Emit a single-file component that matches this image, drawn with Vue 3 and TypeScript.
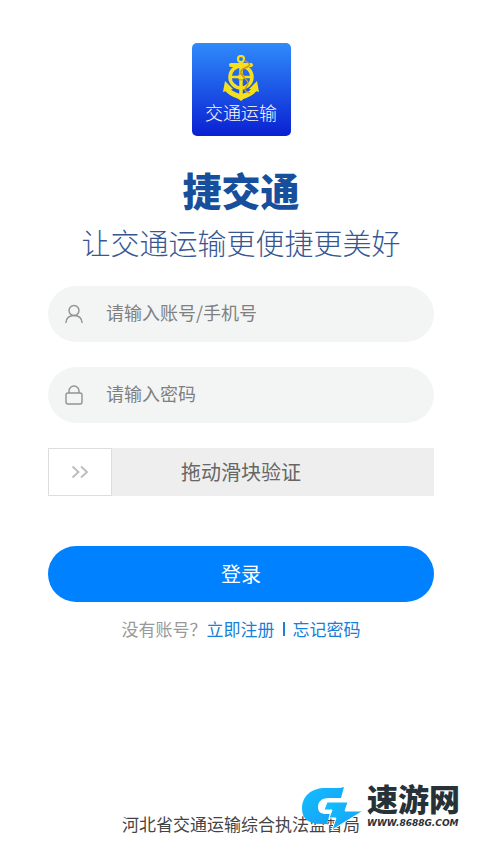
<script setup lang="ts">
import { ref } from 'vue'

const account = ref('')
const password = ref('')
const slider = ref(0)
</script>

<template>
  <main class="page">
    <header class="brand">
      <div class="logo">
        <svg class="anchor" viewBox="0 0 36 46" fill="none" stroke="#f4e01c" aria-hidden="true">
          <circle cx="18" cy="4" r="3" stroke-width="2.2" />
          <path d="M8 10h20" stroke-width="4" stroke-linecap="round" />
          <path d="M18 7v34" stroke-width="3.5" />
          <circle cx="18" cy="22" r="11" stroke-width="3.5" />
          <circle cx="18" cy="22" r="3" fill="#f4e01c" stroke="#c9a820" />
          <path d="M7 22h22" stroke-width="2.5" />
          <path d="M3 32c2 5 8 8 15 10c7-2 13-5 15-10" stroke-width="5" />
          <path d="M0 37l2-11l8 8zM36 37l-2-11l-8 8zM12 41l6 5l6-5z" fill="#f4e01c" stroke="none" />
          <path d="M21 5c5 3 8 5 3 7s-8 4-5 8s8 6 5 11s-4 4 3 7" stroke="#cf9422" stroke-width="1.4" />
        </svg>
        <span class="logo-text">交通运输</span>
      </div>
      <h1 class="title">捷交通</h1>
      <p class="tagline">让交通运输更便捷更美好</p>
    </header>

    <form class="form" @submit.prevent>
      <label class="field">
        <svg class="icon" viewBox="0 0 20 20" aria-hidden="true">
          <circle cx="10" cy="6.5" r="5" />
          <path d="M1.8 19c.4-4.500 3.500-7.500 8.200-7.500s7.800 3 8.200 7.500" />
        </svg>
        <input v-model="account" class="input" type="text" placeholder="请输入账号/手机号" aria-label="账号" />
      </label>
      <label class="field">
        <svg class="icon" viewBox="0 0 20 20" aria-hidden="true">
          <rect x="2" y="8" width="16" height="11" rx="2" />
          <path d="M5 8V6a5 5 0 0 1 10 0v2" />
        </svg>
        <input v-model="password" class="input" type="password" placeholder="请输入密码" aria-label="密码" />
      </label>
      <label class="verify">
        <input v-model="slider" class="range" type="range" min="0" max="100" aria-label="拖动滑块验证" />
        <svg class="chevrons" viewBox="0 0 18 14" aria-hidden="true">
          <path d="M1.500 1.500l6 5.500l-6 5.500M10 1.500l6 5.500l-6 5.500" />
        </svg>
        <span class="verify-text">拖动滑块验证</span>
      </label>
      <button class="submit" type="submit">登录</button>
    </form>

    <nav class="links">
      <span class="hint">没有账号？</span>
      <a href="#register">立即注册</a>
      <span class="divider"></span>
      <a href="#forgot">忘记密码</a>
    </nav>

    <footer class="footer">河北省交通运输综合执法监督局</footer>

    <aside class="watermark">
      <svg class="mark" viewBox="0 0 62 46" aria-hidden="true">
        <defs>
          <linearGradient id="mark-blue" x1="0" y1="0" x2="1" y2="1">
            <stop offset="0" stop-color="#10c0ff" />
            <stop offset="1" stop-color="#1a9cf4" />
          </linearGradient>
        </defs>
        <path fill="url(#mark-blue)" d="M42 0L39 11H27c-8 0-11 4-11 9s3 7 8 7h4l-3 10H20C6 37 0 31 0 22C0 9 9 1 24 1h14z" />
        <path fill="url(#mark-blue)" stroke="#fff" stroke-width="1" d="M25 15h21l-3 9h18L30 43l4-12h-7l3-8h-8z" />
      </svg>
      <div class="mark-words">
        <strong class="mark-name">速游网</strong>
        <span class="mark-url">WWW.8688G.COM</span>
      </div>
    </aside>
  </main>
</template>

<style>
body {
  margin: 0;
  background: #fff;
}
</style>

<style scoped>
.page {
  position: relative;
  box-sizing: border-box;
  min-height: 100vh;
  padding: 43px 46px 17px 48px;
  display: flex;
  flex-direction: column;
  font-family: "Noto Sans CJK SC", sans-serif;
}
.brand {
  display: flex;
  flex-direction: column;
  align-items: center;
}
.logo {
  box-sizing: border-box;
  width: 99px;
  height: 93px;
  padding-top: 12px;
  border-radius: 5px;
  background: linear-gradient(#2f8bfa, #0a20d2);
  display: flex;
  flex-direction: column;
  align-items: center;
}
.anchor {
  width: 36px;
  height: 46px;
}
.logo-text {
  font-family: KaiTi, STKaiti, "Noto Sans CJK SC", sans-serif;
  font-size: 18px;
  font-weight: 300;
  line-height: 22px;
  color: #fff;
}
.title {
  margin: 29px 0 0;
  font-size: 39px;
  font-weight: 900;
  line-height: 48px;
  color: #184f9c;
}
.tagline {
  margin: 9px 0 0;
  font-family: KaiTi, STKaiti, "Noto Sans CJK SC", sans-serif;
  font-size: 29px;
  font-weight: 300;
  line-height: 40px;
  white-space: nowrap;
  color: #365792;
}
.form {
  margin-top: 24px;
  display: flex;
  flex-direction: column;
  gap: 25px;
}
.field {
  height: 56px;
  padding: 0 16px;
  border-radius: 28px;
  background: #f3f5f5;
  display: flex;
  align-items: center;
  gap: 22px;
}
.icon {
  flex: none;
  width: 20px;
  height: 20px;
  fill: none;
  stroke: #929292;
  stroke-width: 1.4;
}
.input {
  flex: 1;
  min-width: 0;
  padding: 0 0 4px;
  border: 0;
  outline: 0;
  background: none;
  font: inherit;
  font-size: 18px;
  line-height: 28px;
  color: #333;
}
.input::placeholder {
  color: #808080;
  opacity: 1;
}
.verify {
  display: grid;
  grid-template-columns: 64px 1fr 64px;
  align-items: center;
  height: 48px;
  background: #eee;
}
.range {
  grid-area: 1 / 1 / 2 / 4;
  appearance: none;
  width: 100%;
  height: 48px;
  margin: 0;
  background: none;
}
.range::-webkit-slider-thumb {
  appearance: none;
  box-sizing: border-box;
  width: 64px;
  height: 48px;
  border: 1px solid #ddd;
  background: #fff;
}
.chevrons {
  grid-area: 1 / 1;
  justify-self: center;
  z-index: 1;
  width: 18px;
  height: 14px;
  fill: none;
  stroke: #bbb;
  stroke-width: 1.8;
  pointer-events: none;
}
.verify-text {
  grid-area: 1 / 2;
  justify-self: center;
  font-size: 20px;
  line-height: 28px;
  color: #666;
  pointer-events: none;
}
.submit {
  height: 56px;
  margin-top: 25px;
  padding: 0 0 2px;
  border: 0;
  border-radius: 28px;
  background: #0081ff;
  font: inherit;
  font-size: 20px;
  color: #fff;
}
.links {
  margin-top: 15px;
  display: flex;
  justify-content: center;
  align-items: center;
  font-size: 17px;
  line-height: 24px;
  color: #1780d8;
}
.links a {
  color: inherit;
  text-decoration: none;
}
.hint {
  color: #999;
}
.divider {
  width: 2px;
  height: 14px;
  margin: 0 8px;
  background: #1780d8;
}
.footer {
  margin-top: auto;
  text-align: center;
  font-size: 17px;
  line-height: 24px;
  color: #444;
}
.watermark {
  position: absolute;
  right: 20px;
  bottom: 20px;
  display: flex;
  align-items: flex-end;
  gap: 3px;
  color: #263238;
}
.mark {
  width: 62px;
  height: 46px;
}
.mark-words {
  display: flex;
  flex-direction: column;
  gap: 4px;
  padding-bottom: 5px;
}
.mark-name {
  font-size: 31px;
  font-weight: 900;
  line-height: 32px;
}
.mark-url {
  font-family: "DejaVu Sans", sans-serif;
  font-size: 9px;
  font-weight: 700;
  font-style: italic;
  line-height: 10px;
}
</style>
